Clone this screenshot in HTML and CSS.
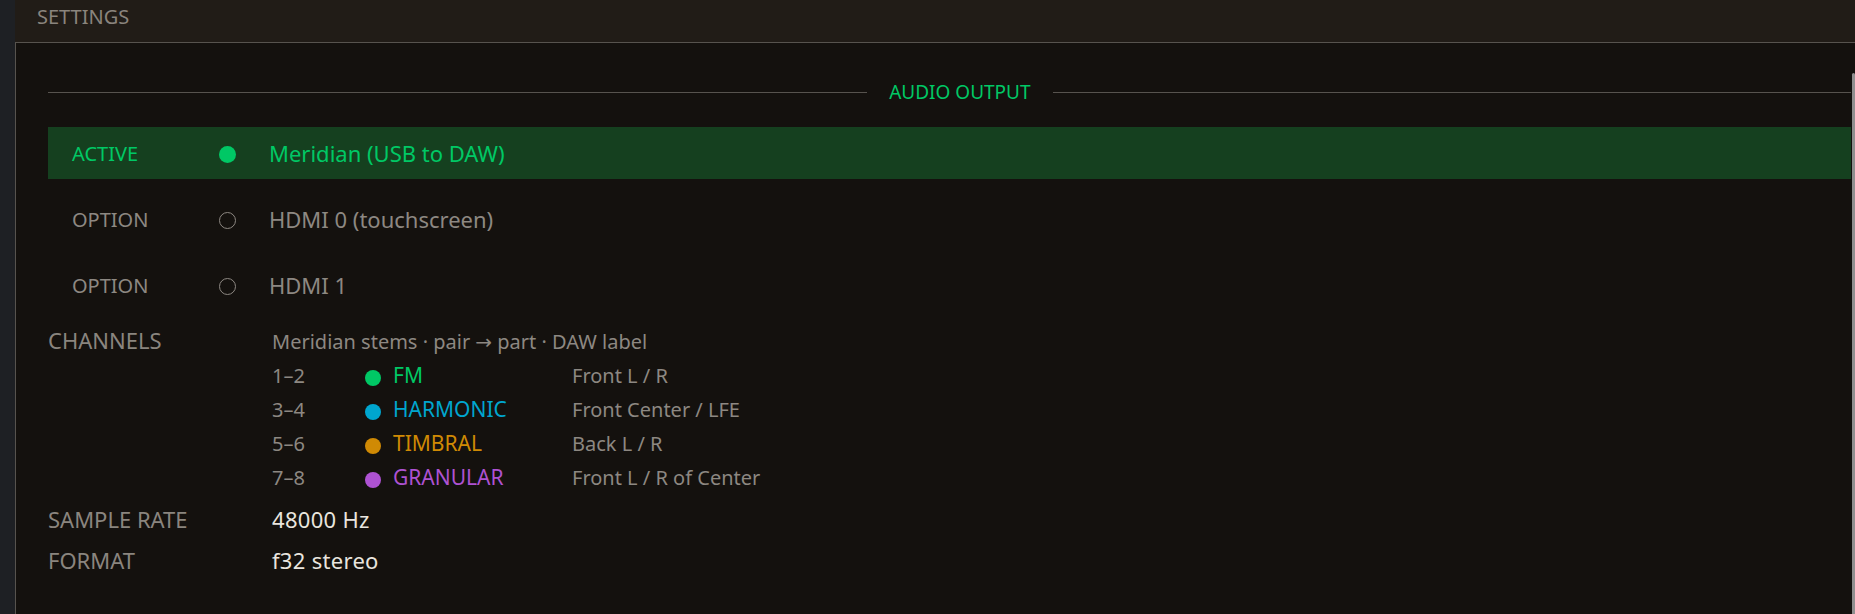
FILE: index.html
```html
<!DOCTYPE html>
<html lang="en">
<head>
<meta charset="utf-8">
<title>Settings</title>
<link rel="stylesheet" href="styles.css">
</head>
<body>
<div class="app">
  <aside class="rail"></aside>
  <main class="main">
    <header class="titlebar">SETTINGS</header>
    <section class="panel">
      <div class="section-head">
        <span class="rule lead"></span>
        <h2 class="section-title">AUDIO OUTPUT</h2>
        <span class="rule"></span>
      </div>
      <ul class="devices">
        <li class="device active">
          <span class="state">ACTIVE</span>
          <span class="radio on"></span>
          <span class="name">Meridian (USB to DAW)</span>
        </li>
        <li class="device">
          <span class="state">OPTION</span>
          <span class="radio"></span>
          <span class="name">HDMI 0 (touchscreen)</span>
        </li>
        <li class="device">
          <span class="state">OPTION</span>
          <span class="radio"></span>
          <span class="name">HDMI 1</span>
        </li>
      </ul>
      <dl class="props">
        <dt>CHANNELS</dt>
        <dd class="channels">
          <div class="ch-head">Meridian stems · pair → part · DAW label</div>
          <div class="ch-grid">
            <span class="ch-num">1–2</span><span class="ch-dot"><i class="dot fm"></i></span><span class="ch-part fm">FM</span><span class="ch-label">Front L / R</span>
            <span class="ch-num">3–4</span><span class="ch-dot"><i class="dot harmonic"></i></span><span class="ch-part harmonic">HARMONIC</span><span class="ch-label">Front Center / LFE</span>
            <span class="ch-num">5–6</span><span class="ch-dot"><i class="dot timbral"></i></span><span class="ch-part timbral">TIMBRAL</span><span class="ch-label">Back L / R</span>
            <span class="ch-num">7–8</span><span class="ch-dot"><i class="dot granular"></i></span><span class="ch-part granular">GRANULAR</span><span class="ch-label">Front L / R of Center</span>
          </div>
        </dd>
        <dt class="simple">SAMPLE RATE</dt>
        <dd class="simple value">48000 Hz</dd>
        <dt class="simple">FORMAT</dt>
        <dd class="simple value">f32 stereo</dd>
      </dl>
      <div class="scroll-thumb"></div>
    </section>
  </main>
</div>
</body>
</html>
```

FILE: styles.css
```css
html, body {
  margin: 0;
  height: 100%;
  overflow: hidden;
}

body {
  background: #1e2024;
  font-family: "Noto Sans", "DejaVu Sans", sans-serif;
}

.app {
  display: flex;
  height: 100vh;
}

.rail {
  flex: none;
  width: 15px;
  background: #1e2024;
}

.main {
  flex: 1;
  min-width: 0;
  display: flex;
  flex-direction: column;
}

.titlebar {
  flex: none;
  height: 42px;
  box-sizing: border-box;
  padding: 3px 0 0 22px;
  background: #211c17;
  color: #8a847d;
  font-size: 20px;
  line-height: 27px;
}

.panel {
  flex: 1;
  position: relative;
  background: #14110e;
  border-top: 1px solid #57534e;
  border-left: 1px solid #57534e;
  padding: 35px 4px 0 32px;
}

.section-head {
  display: flex;
  align-items: center;
  gap: 22px;
  height: 28px;
}

.rule {
  flex: 1;
  height: 1px;
  background: #57534e;
}

.rule.lead {
  flex-grow: 1.026;
}

.section-title {
  margin: 0;
  font-size: 19px;
  font-weight: 400;
  line-height: 28px;
  color: #00c865;
}

.devices {
  list-style: none;
  margin: 21px 0 0;
  padding: 0;
  display: flex;
  flex-direction: column;
  gap: 14px;
}

.device {
  display: grid;
  grid-template-columns: 147px 50px 1fr;
  align-items: center;
  height: 52px;
  padding-left: 24px;
  color: #8d8882;
}

.device.active {
  background: #15401f;
  color: #00c865;
}

.state {
  font-size: 20px;
}

.name {
  font-size: 22px;
}

.radio {
  width: 17px;
  height: 17px;
  margin-top: 2px;
  box-sizing: border-box;
  border-radius: 50%;
  border: 1.5px solid #8d8882;
}

.radio.on {
  border: none;
  background: #00c865;
}

.props {
  display: grid;
  grid-template-columns: 224px 1fr;
  align-items: baseline;
  margin: 12px 0 0;
}

.props dt {
  font-size: 22px;
  line-height: 34px;
  color: #8a857f;
}

.props dd {
  margin: 0;
}

.props .simple {
  line-height: 41px;
}

.channels {
  padding-bottom: 4px;
  font-size: 20px;
  line-height: 34px;
  color: #8d8882;
}

.ch-grid {
  display: grid;
  grid-template-columns: 93px 28px 179px auto;
  grid-auto-rows: 34px;
  align-items: baseline;
}

.ch-part {
  font-size: 21px;
  line-height: 28px;
}

.dot {
  display: inline-block;
  width: 16px;
  height: 16px;
  border-radius: 50%;
  vertical-align: -3px;
}

.fm { color: #00c865; }
.harmonic { color: #00a6cf; }
.timbral { color: #d08a04; }
.granular { color: #ae52d2; }

.dot.fm { background: #00c865; }
.dot.harmonic { background: #00a6cf; }
.dot.timbral { background: #d08a04; }
.dot.granular { background: #ae52d2; }

.value {
  font-size: 22px;
  letter-spacing: 0.3px;
  color: #e9e5df;
}

.scroll-thumb {
  position: absolute;
  top: 30px;
  right: 0;
  bottom: 0;
  width: 3px;
  border-radius: 2px 2px 0 0;
  background: #8f8f8f;
}
```
